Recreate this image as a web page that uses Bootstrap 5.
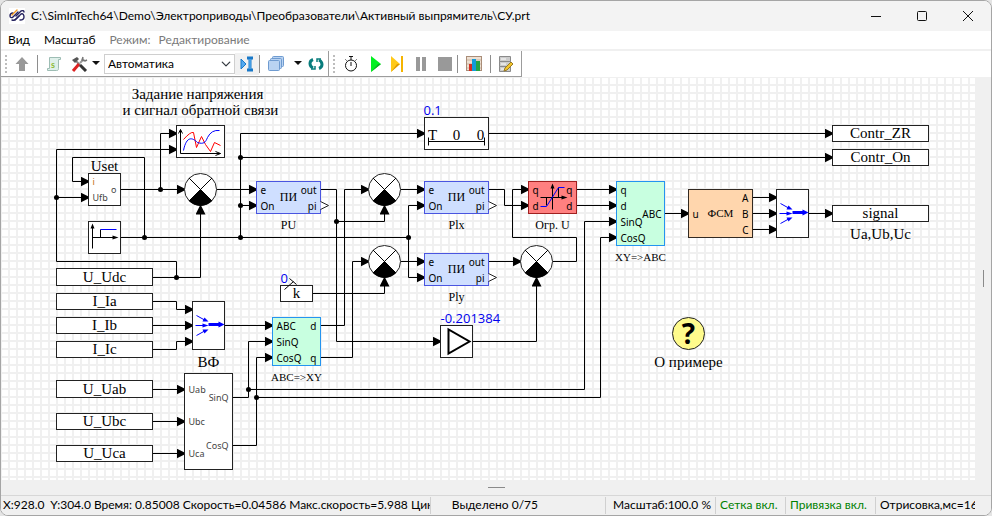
<!DOCTYPE html>
<html lang="ru">
<head>
<meta charset="utf-8">
<meta name="viewport" content="width=device-width, initial-scale=1">
<title>СУ.prt</title>
<link href="https://cdn.jsdelivr.net/npm/bootstrap@5.3.0/dist/css/bootstrap.min.css" rel="stylesheet">
<style>
  html, body { height: 100%; }
  body { font: 12px/16px Lato, "Open Sans", sans-serif; color: #000; background: #e4e4e4; }
  .app-window { height: 100vh; border: 1px solid #a5a5a5; border-radius: 8px; background: #fff; }
  .title-strip { height: 30px; background: #f3f3f3; }
  .title-text { padding-left: 6px; }
  .win-btn { width: 46px; border: 0; background: none; padding: 0; }
  .menu-strip { height: 20px; border-bottom: 2px solid #f0f0f0; padding-left: 7px; }
  .menu-strip a { color: #000; text-decoration: none; margin-right: 14px; }
  .menu-strip .mode-text { color: #7a7a7a; }
  .tool-strip { height: 26px; }
  .tool-group { border-right: 1px solid #9c9c9c; border-bottom: 1px solid #9c9c9c; }
  .grip { width: 2px; height: 18px; background: repeating-linear-gradient(#bdbdbd 0 2px, transparent 2px 4px); }
  .rule { width: 1px; height: 18px; background: #8e8e8e; }
  .tool-btn { border: 0; background: none; padding: 0; height: 22px; width: 24px; }
  .tool-wide { width: 30px; }
  .tool-extra { width: 32px; }
  .tool-slim { width: 18px; }
  .tool-caret { width: 16px; }
  .tool-tight { width: 12px; }
  .tool-btn svg, .win-btn svg { display: block; margin: auto; }
  .tool-btn.is-on { background: #f1f1f1; }
  .solver-select { width: 131px; height: 20px; font-size: 12px; line-height: 16px; padding: 0 20px 0 3px; border: 1px solid #cfcfcf; border-radius: 0; background-size: 10px 10px; background-position: right 3px center; color: #000; }
  .scheme { background-color: #fff; }
  .scheme svg { display: block; }
  .v-scroll { width: 16px; background: #f0f0f0; }
  .v-scroll span { width: 1px; height: 17px; background: #8a8a8a; }
  .h-scroll { height: 15px; background: #f0f0f0; }
  .h-scroll span { width: 17px; height: 1px; background: #8a8a8a; }
  .status-strip { height: 20px; background: #f0f0f0; border-top: 1px solid #d7d7d7; white-space: pre; }
  .cell { border-right: 1px solid #d0d0d0; overflow: hidden; height: 17px; }
  .cell-main { width: 430px; padding-left: 2px; } .cell-sel { width: 175px; } .cell-sel span { margin-right: 19px; } .cell-zoom { width: 110px; }
  .cell-grid { width: 70px; } .cell-snap { width: 90px; }
  .green-text { color: #008000; }
  .wire { fill: none; stroke: #000; stroke-width: 1; }
  .box { fill: #fff; stroke: #222; stroke-width: 1; }
  .pi-box { fill: #cfdfff; stroke: #4a55e0; }
  .conv-box { fill: #c8ffe0; stroke: #2494f0; }
  .lbl { font-family: "Liberation Serif", serif; font-size: 15px; text-anchor: middle; }
  .lbl-s { font-family: "Liberation Serif", serif; font-size: 12px; text-anchor: middle; }
  .lbl-xs { font-size: 11px; }
  .port { font-family: "Noto Sans", sans-serif; font-size: 10px; }
  .port-s { font-family: "Noto Sans", sans-serif; font-size: 9px; fill: #444; }
  .val { font-family: "Open Sans", sans-serif; font-size: 13px; fill: #0000ee; }
  .ra { text-anchor: end; }
</style>
</head>
<body>
<div class="app-window d-flex flex-column overflow-hidden">
  <header class="title-strip d-flex align-items-stretch flex-shrink-0">
    <div class="d-flex align-items-center flex-grow-1 ps-2">
      <svg width="16" height="16" viewBox="0 0 16 16" fill="none" stroke-width="1.4" stroke-linecap="round"><rect width="16" height="16" fill="#fff"/><path d="M4 5C2 5 1 6 1 8s2 2 3 1l5-5M3 12c2 1 3 0 4-1l3-3" stroke="#26235f"/><path d="M8 2 3 7" stroke="#f39a1e"/><path d="M7 8l5-5c2-1 3 0 3 1M6 12l6-6c2-1 3 1 3 3s-2 3-4 3" stroke="#26235f"/></svg>
      <span class="title-text">C:\SimInTech64\Demo\Электроприводы\Преобразователи\Активный выпрямитель\СУ.prt</span>
    </div>
    <button class="win-btn" aria-label="Свернуть"><svg width="12" height="12" stroke="#111" fill="none"><path d="M1 6.500h10"/></svg></button>
    <button class="win-btn" aria-label="Развернуть"><svg width="12" height="12" stroke="#111" fill="none"><rect x="1.500" y="1.500" width="9" height="9" rx="1"/></svg></button>
    <button class="win-btn" aria-label="Закрыть"><svg width="12" height="12" stroke="#111" fill="none"><path d="M1 1l10 10M11 1 1 11"/></svg></button>
  </header>
  <nav class="menu-strip d-flex align-items-center flex-shrink-0">
    <a href="#">Вид</a><a href="#">Масштаб</a>
    <span class="mode-text me-2">Режим:</span><span class="mode-text">Редактирование</span>
  </nav>
  <div class="tool-strip d-flex flex-shrink-0">
    <div class="tool-group d-flex align-items-center ps-1">
      <span class="grip"></span>
      <button class="tool-btn tool-wide" aria-label="Вверх"><svg width="16" height="16"><path d="M8 1 14.500 8H11v7H5V8H1.500z" fill="#999"/></svg></button>
      <span class="rule"></span>
      <button class="tool-btn tool-extra" aria-label="Скрипт"><svg width="16" height="16"><path d="M3.500 1.500h11v2h-2v9c0 2-1 2-2 2h-9v-2h2z" fill="#dff0ea" stroke="#9dbdb4"/><text x="5" y="11.500" font-size="9" font-weight="bold" fill="#8dbb33">s</text></svg></button>
      <button class="tool-btn tool-slim" aria-label="Инструменты"><svg width="17" height="16" fill="none"><path d="M4 4l5 5" stroke="#8a8a8a" stroke-width="2"/><path d="M1 4l5-3 2 2-4 4z" fill="#555"/><path d="M9 7l4-4" stroke="#999" stroke-width="2"/><path d="M12 1l-1 3 3 1 2-1" stroke="#777" stroke-width="1.500"/><path d="M8 8l-6 7" stroke="#d22" stroke-width="3"/><path d="M9 9l6 6" stroke="#333" stroke-width="3"/></svg></button>
      <button class="tool-btn tool-caret" aria-label="Список инструментов"><svg width="8" height="5"><path d="M0 0h8L4 4z" fill="#111"/></svg></button>
      <select class="form-select solver-select" aria-label="Режим расчёта"><option>Автоматика</option></select>
      <button class="tool-btn is-on" aria-label="Привязка"><svg width="14" height="16"><path d="M1 3l5 5-5 5z" fill="#55aaf0" stroke="#1878c8"/><path d="M7 2h6M7 14h6M10 2v12" stroke="#1878c8" stroke-width="3"/><path d="M10 3v10" stroke="#6cc0ff"/></svg></button>
      <span class="rule"></span>
      <button class="tool-btn tool-extra" aria-label="Слои"><svg width="17" height="16" fill="#b9d3f2" stroke="#6f9bd0"><rect x="4.500" y=".5" width="11" height="10" rx="1"/><rect x="2.500" y="2.500" width="11" height="10" rx="1"/><rect x=".5" y="4.500" width="11" height="10" rx="1"/></svg></button>
      <button class="tool-btn tool-tight" aria-label="Список слоёв"><svg width="8" height="5"><path d="M0 0h8L4 4z" fill="#111"/></svg></button>
      <button class="tool-btn" aria-label="Обновить"><svg width="16" height="14" fill="none" stroke="#087c7c" stroke-width="3"><path d="M5 2.500C1 4 1 9 5 11M11 11.500C15 10 15 5 11 3"/><path d="M3 12h4V9M13 2H9v3" stroke-width="1.500"/></svg></button>
    </div>
    <div class="tool-group d-flex align-items-center ps-1">
      <span class="grip"></span>
      <button class="tool-btn tool-extra" aria-label="Таймер"><svg width="14" height="16" fill="none" stroke="#111"><circle cx="7" cy="9.500" r="5.500"/><path d="M7 4V1M5 .5h4M7 6v4M11.500 4.500l1-1M2.500 4.500l-1-1"/></svg></button>
      <button class="tool-btn tool-slim" aria-label="Пуск"><svg width="12" height="16"><path d="M1 0l10 8-10 8z" fill="#00f020"/><path d="M1 16l10-8H8z" fill="#0baf20"/></svg></button>
      <button class="tool-btn" aria-label="Шаг"><svg width="14" height="16"><path d="M1 0l9 8-9 8z" fill="#ffc918"/><path d="M11 0h2v16h-2z" fill="#f5b400"/><path d="M1 16l9-8H7z" fill="#e09a00"/></svg></button>
      <button class="tool-btn" aria-label="Пауза"><svg width="12" height="14" fill="#999"><path d="M1 0h4v14H1zM7 0h4v14H7z"/></svg></button>
      <button class="tool-btn" aria-label="Стоп"><svg width="16" height="14" fill="#999"><path d="M1 0h14v14H1z"/></svg></button>
      <span class="rule"></span>
      <button class="tool-btn tool-extra" aria-label="Графики"><svg width="16" height="16"><rect x=".5" y=".5" width="15" height="14" fill="#eee0d2" stroke="#a98d78"/><path d="M1 4h14M1 8h14M1 12h14" stroke="#c9b4a0"/><path d="M3 8h3v7H3z" fill="#d92c20"/><path d="M6 3h4v12H6z" fill="#149bd8"/><path d="M10 5h4v10h-4z" fill="#25a343"/></svg></button>
      <span class="rule"></span>
      <button class="tool-btn tool-wide" aria-label="Редактор базы"><svg width="16" height="16"><path d="M1.500.500h11v5h-11zM1.500 5.500h11v5h-11zM1.500 10.500h11v5h-11z" fill="#ccc" stroke="#8a8a8a"/><path d="M3 3h5M3 8h5M3 13h3" stroke="#fff"/><path d="M6 15l1-3 6-6 2 2-6 6z" fill="#f2c52c" stroke="#997a20"/></svg></button>
    </div>
  </div>
  <div class="d-flex flex-grow-1 overflow-hidden">
    <main class="scheme flex-grow-1 overflow-hidden">
      <svg width="1920" height="1080" viewBox="0.5 76.5 1920 1080">
        <defs>
          <pattern id="grid" x="-.5" y="83.500" width="8" height="8" patternUnits="userSpaceOnUse"><path d="M0 1h8M1 0v8" stroke="#f0f0f0" stroke-width="2" fill="none"/></pattern>
          <marker id="arrow" orient="auto" markerUnits="userSpaceOnUse" markerWidth="12" markerHeight="12" refX="9" refY="5" viewBox="0 0 12 12"><path d="M0 0 10 5 0 10z"/></marker>
          <g id="sum"><circle r="16" fill="#fff" stroke="#222"/><path d="M0 0-11.500 11.500A16 16 0 0 0 11.500 11.500z"/><path d="M-11.500-11.500 11.500 11.500M11.500-11.500-11.500 11.500" stroke="#000"/></g>
          <g id="mux" fill="#00f" stroke="#00f"><path d="M4-10 13-5M3 0h11M4 10 13 5" /><path d="M16-4l-6 0 2-4zM16 0l-6-2v4zM16 4l-6 0 2 4z" stroke="none"/><path d="M16-1h11" stroke-width="3"/><path d="M32-1l-6-3v6z" stroke="none"/></g>
          <path id="pin" d="M0-4 8 0 0 4" fill="#fff" stroke="#222"/>
        </defs>
        <rect y="76" width="1921" height="1081" fill="url(#grid)"/>

        <g class="wire" marker-end="url(#arrow)">
          <path d="M120 189H185"/><path d="M160 189V133H177"/>
          <path d="M176 277V261H56V149H177"/><path d="M56 197H89"/>
          <path d="M144 237V157H72V181H89"/>
          <path d="M152 277H200V205"/>
          <path d="M240 237V133H425"/><path d="M240 157H833"/><path d="M240 205H257"/>
          <path d="M216 189H257"/><path d="M320 189H336V341H441"/><path d="M336 221H384V205"/>
          <path d="M320 325H344V189H369"/><path d="M320 357H352V261H369"/><path d="M312 293H384V277"/>
          <path d="M400 189H425"/><path d="M408 205H425"/><path d="M408 205V277H425"/><path d="M400 261H425"/>
          <path d="M488 189H504V205H529"/><path d="M552 261H576V237H512V189H529"/><path d="M488 261H521"/>
          <path d="M472 341H536V277"/><path d="M576 189H617"/><path d="M576 205H617"/>
          <path d="M248 389H584V221H617"/><path d="M256 397H600V237H617"/>
          <path d="M664 213H689"/><path d="M752 197H777"/><path d="M752 213H777"/><path d="M752 229H777"/><path d="M808 213H833"/><path d="M488 133H833"/>
          <path d="M152 301H176V309H193"/><path d="M152 325H193"/><path d="M152 349H176V341H193"/><path d="M224 325H273"/>
          <path d="M152 389H185"/><path d="M152 421H185"/><path d="M152 453H185"/>
          <path d="M232 397H248V341H273"/><path d="M232 445H256V357H273"/>
        </g>
        <path class="wire" d="M120 237H408"/>
        <g>
          <circle cx="160" cy="189" r="2.500"/><circle cx="144" cy="237" r="2.500"/><circle cx="56" cy="197" r="2.500"/><circle cx="240" cy="157" r="2.500"/><circle cx="240" cy="205" r="2.500"/><circle cx="240" cy="237" r="2.500"/><circle cx="176" cy="277" r="2.500"/><circle cx="336" cy="221" r="2.500"/><circle cx="408" cy="237" r="2.500"/><circle cx="248" cy="389" r="2.500"/><circle cx="256" cy="397" r="2.500"/>
        </g>

        <g class="box">
          <rect x="176" y="125" width="48" height="32"/><rect x="88" y="173" width="32" height="32"/><rect x="88" y="221" width="32" height="32"/>
          <rect x="56" y="268" width="96" height="17"/><rect x="56" y="293" width="96" height="16"/><rect x="56" y="317" width="96" height="16"/><rect x="56" y="341" width="96" height="16"/>
          <rect x="56" y="380" width="96" height="17"/><rect x="56" y="413" width="96" height="16"/><rect x="56" y="445" width="96" height="16"/>
          <rect x="184" y="373" width="48" height="96"/><rect x="192" y="301" width="32" height="48"/>
          <rect x="424" y="117" width="64" height="32"/><rect x="280" y="285" width="32" height="16"/><rect x="440" y="325" width="32" height="32"/>
          <rect x="776" y="189" width="32" height="48"/>
          <rect x="832" y="125" width="96" height="16"/><rect x="832" y="149" width="96" height="16"/><rect x="832" y="205" width="96" height="16"/>
        </g>
        <g class="box pi-box"><rect x="256" y="181" width="64" height="32"/><rect x="424" y="181" width="64" height="32"/><rect x="424" y="253" width="64" height="32"/></g>
        <g class="box conv-box"><rect x="616" y="181" width="48" height="64"/><rect x="272" y="317" width="48" height="48"/></g>
        <rect x="528" y="181" width="48" height="32" fill="#ff8080" stroke="#a02020"/>
        <rect x="688" y="189" width="64" height="48" fill="#ffd6ad" stroke="#332a22"/>
        <use href="#sum" x="200" y="189"/><use href="#sum" x="384" y="189"/><use href="#sum" x="384" y="261"/><use href="#sum" x="536" y="261"/>
        <use href="#mux" x="192" y="325"/><use href="#mux" x="776" y="213"/>
        <use href="#pin" x="320" y="205"/><use href="#pin" x="488" y="205"/><use href="#pin" x="488" y="277"/>

        <g fill="none" stroke="#000">
          <path d="M180 153V129M178 133l2-4 2 4M180 153h40M215 151l5 2-5 2"/>
          <path d="M183 139q7-8 10-7l3 15 5-11 4 8 5 7 4-9 6 3" stroke="#f00"/>
          <path d="M183 150c3-15 9-13 14-8 6 2 8 0 10-5q4-8 12-7" stroke="#00f"/>
          <path d="M92 248V225M92 237h23M100 237v-8" /><path d="M100 229h16" stroke="#00f"/><path d="M90 228l2-5 2 5zM112 235l6 2-6 2z" fill="#000" stroke="none"/>
          <path d="M428 141h56M428 137v8M484 137v8"/>
          <path d="M448 329v24l21-12z" stroke-width="2"/>
          <path d="M284 289l9-8M289 278l7 6"/>
          <path d="M552 209V185M540 197h24M546 197v8M558 197v-10"/><path d="M550 188l2-5 2 5zM561 195l6 2-6 2z" fill="#000" stroke="none"/><path d="M540 206h6l12-19h6" stroke="#00f"/>
        </g>
        <circle cx="688" cy="333" r="16" fill="#fffb8c" stroke="#222"/>
        <text x="688" y="343" text-anchor="middle" font-family="Open Sans, sans-serif" font-size="28" font-weight="bold">?</text>

        <g class="lbl">
          <text x="197" y="98">Задание напряжения</text><text x="200" y="114">и сигнал обратной связи</text>
          <text x="104" y="170">Uset</text>
          <text x="104" y="281">U_Udc</text><text x="104" y="305">I_Ia</text><text x="104" y="329">I_Ib</text><text x="104" y="353">I_Ic</text>
          <text x="104" y="393">U_Uab</text><text x="104" y="425">U_Ubc</text><text x="104" y="457">U_Uca</text>
          <text x="208" y="366">ВФ</text><text x="296" y="297">k</text>
          <text x="432" y="139">T</text><text x="456" y="139">0</text><text x="480" y="139">0</text>
          <text x="880" y="137">Contr_ZR</text><text x="880" y="161">Contr_On</text><text x="880" y="217">signal</text><text x="880" y="238">Ua,Ub,Uc</text>
          <text x="688" y="366">О примере</text>
        </g>
        <g class="lbl-s">
          <text x="288" y="228">PU</text><text x="456" y="228">Plx</text><text x="456" y="300">Ply</text><text x="552" y="228">Огр. U</text>
          <text x="288" y="200">ПИ</text><text x="456" y="200">ПИ</text><text x="456" y="272">ПИ</text>
        </g>
        <g class="lbl-s lbl-xs">
          <text x="640" y="260">XY=&gt;ABC</text><text x="296" y="380">ABC=&gt;XY</text><text x="720" y="216">ФСМ</text>
        </g>
        <g class="port">
          <text x="260" y="193">e</text><text x="260" y="209">On</text><text x="316" y="193" class="ra">out</text><text x="316" y="209" class="ra">pi</text>
          <text x="428" y="193">e</text><text x="428" y="209">On</text><text x="484" y="193" class="ra">out</text><text x="484" y="209" class="ra">pi</text>
          <text x="428" y="265">e</text><text x="428" y="281">On</text><text x="484" y="265" class="ra">out</text><text x="484" y="281" class="ra">pi</text>
          <text x="532" y="193">q</text><text x="532" y="209">d</text><text x="572" y="193" class="ra">q</text><text x="572" y="209" class="ra">d</text>
          <text x="620" y="193">q</text><text x="620" y="209">d</text><text x="620" y="225">SinQ</text><text x="620" y="241">CosQ</text><text x="661" y="217" class="ra">ABC</text>
          <text x="276" y="329">ABC</text><text x="276" y="345">SinQ</text><text x="276" y="361">CosQ</text><text x="316" y="329" class="ra">d</text><text x="316" y="361" class="ra">q</text>
          <text x="692" y="217">u</text><text x="748" y="201" class="ra">A</text><text x="748" y="217" class="ra">B</text><text x="748" y="233" class="ra">C</text>
        </g>
        <g class="port-s">
          <text x="92" y="184" fill="#c07020">i</text><text x="92" y="200">Ufb</text><text x="116" y="192" class="ra">o</text>
          <text x="188" y="392">Uab</text><text x="188" y="424">Ubc</text><text x="188" y="456">Uca</text><text x="228" y="400" class="ra">SinQ</text><text x="228" y="448" class="ra">CosQ</text>
        </g>
        <g class="val"><text x="423" y="114">0.1</text><text x="280" y="282">0</text><text x="440" y="322">-0.201384</text></g>
      </svg>
    </main>
    <div class="v-scroll flex-shrink-0 d-flex align-items-center justify-content-center"><span></span></div>
  </div>
  <div class="h-scroll flex-shrink-0 d-flex align-items-center justify-content-center"><span></span></div>
  <footer class="status-strip d-flex align-items-center flex-shrink-0">
    <div class="cell cell-main flex-shrink-0">X:928.0  Y:304.0 Время: 0.85008 Скорость=0.04586 Макс.скорость=5.988 Цикл,м</div>
    <div class="cell cell-sel flex-shrink-0 text-end pe-5"><span>Выделено 0/75</span></div>
    <div class="cell cell-zoom flex-shrink-0 text-end pe-1">Масштаб:100.0 %</div>
    <div class="cell cell-grid flex-shrink-0 green-text ps-1">Сетка вкл.</div>
    <div class="cell cell-snap flex-shrink-0 green-text ps-1">Привязка вкл.</div>
    <div class="cell border-0 flex-grow-1 ps-1 me-3">Отрисовка,мс=16</div>
  </footer>
</div>
<script src="https://cdn.jsdelivr.net/npm/bootstrap@5.3.0/dist/js/bootstrap.bundle.min.js"></script>
</body>
</html>
